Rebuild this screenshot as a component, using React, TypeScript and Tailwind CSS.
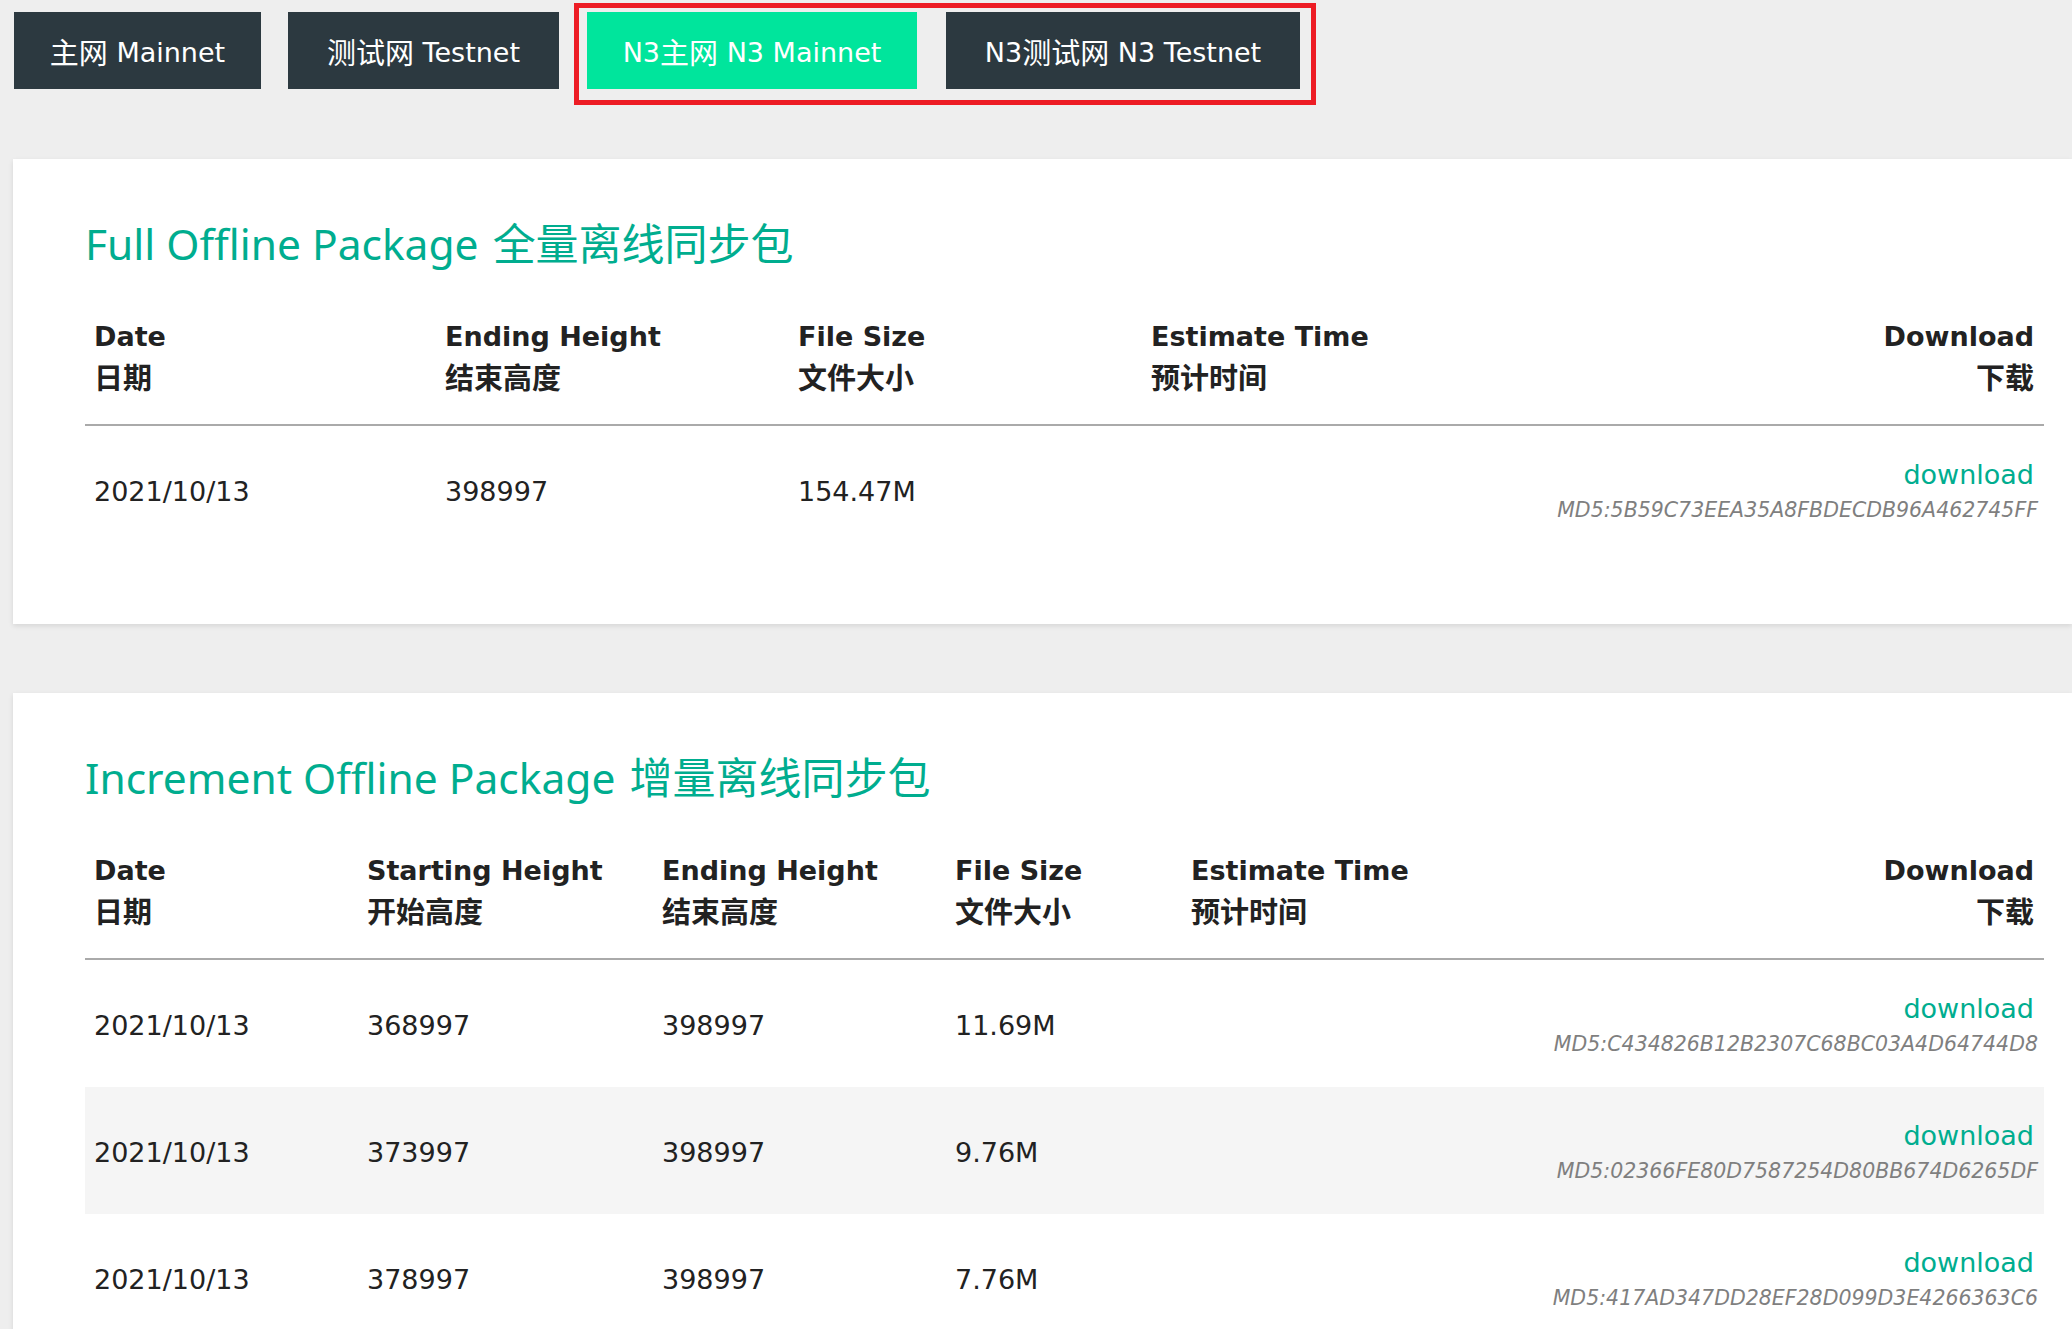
import React from 'react';

interface Row {
  date: string;
  start?: string;
  end: string;
  size: string;
  md5: string;
}

const body = { fontFamily: '"DejaVu Sans", "Noto Sans CJK SC", sans-serif' };
const titleFont = { fontFamily: '"Noto Sans", "Noto Sans CJK SC", sans-serif' };

const fullRows: Row[] = [
  { date: '2021/10/13', end: '398997', size: '154.47M', md5: 'MD5:5B59C73EEA35A8FBDECDB96A462745FF' },
];

const incRows: Row[] = [
  { date: '2021/10/13', start: '368997', end: '398997', size: '11.69M', md5: 'MD5:C434826B12B2307C68BC03A4D64744D8' },
  { date: '2021/10/13', start: '373997', end: '398997', size: '9.76M', md5: 'MD5:02366FE80D7587254D80BB674D6265DF' },
  { date: '2021/10/13', start: '378997', end: '398997', size: '7.76M', md5: 'MD5:417AD347DD28EF28D099D3E4266363C6' },
];

// CJK glyphs in the reference render a touch larger than the latin text
const Cn: React.FC<{ children: React.ReactNode }> = ({ children }) => (
  <span className="text-[29px] leading-[28px]">{children}</span>
);

const Head: React.FC<{ en: string; cn: string; right?: boolean }> = ({ en, cn, right }) => (
  <div className={`flex flex-col px-[9px] font-bold leading-[42px] text-[#222] ${right ? 'items-end pr-[10px]' : ''}`}>
    <span>{en}</span>
    <span className="pt-[1px]">
      <Cn>{cn}</Cn>
    </span>
  </div>
);

const Cell: React.FC<{ children?: React.ReactNode }> = ({ children }) => <div className="px-[9px] pt-[4px]">{children}</div>;

const DownloadCell: React.FC<{ md5: string }> = ({ md5 }) => (
  <div className="flex flex-col items-end pr-[10px]">
    <a className="pt-[1px] text-[27px] leading-[40px] text-[#00ad8f]">download</a>
    <span className="mr-[-4px] text-[20.5px] italic leading-[31px] text-[#7f7f7f]">{md5}</span>
  </div>
);

const Card: React.FC<{ title: string; cn: string; children: React.ReactNode; className?: string }> = ({ title, cn, children, className }) => (
  <div className={`ml-[13px] bg-white pb-[71px] pl-[72px] pr-[28px] pt-[53px] shadow-[0_2px_5px_rgba(0,0,0,0.1)] ${className ?? ''}`}>
    <h2 className="mb-[12px] text-[42.5px] leading-[64px] text-[#00ad8f]" style={titleFont}>
      {title} <span className="ml-[3px] text-[43px] leading-[40px]">{cn}</span>
    </h2>
    {children}
  </div>
);

export default function App() {
  return (
    <div className="min-h-screen overflow-hidden bg-[#eeeeee] text-[27px] text-[#222]" style={body}>
      {/* network tabs */}
      <div className="flex items-start pl-[14px] pt-[3px]">
        <div className="mr-[27px] mt-[9px] flex h-[77px] w-[247px] items-center justify-center bg-[#2c3940] pt-[6px] text-white">
          <Cn>主网</Cn>&nbsp;Mainnet
        </div>
        <div className="mr-[15px] mt-[9px] flex h-[77px] w-[271px] items-center justify-center bg-[#2c3940] pt-[6px] text-white">
          <Cn>测试网</Cn>&nbsp;Testnet
        </div>
        <div className="flex border-[5px] border-[#ed1c24] pb-[11px] pl-[8px] pr-[11px] pt-[4px]">
          <div className="flex h-[77px] w-[330px] items-center justify-center bg-[#00e59c] pt-[6px] text-white">
            N3<Cn>主网</Cn>&nbsp;N3 Mainnet
          </div>
          <div className="ml-[29px] flex h-[77px] w-[354px] items-center justify-center bg-[#2c3940] pt-[6px] text-white">
            N3<Cn>测试网</Cn>&nbsp;N3 Testnet
          </div>
        </div>
      </div>

      <Card title="Full Offline Package" cn="全量离线同步包" className="mt-[54px]">
        <div className="grid grid-cols-[351px_353px_353px_1fr_auto] border-b-2 border-[#aaaaaa] pb-[23px] pt-[28px]">
          <Head en="Date" cn="日期" />
          <Head en="Ending Height" cn="结束高度" />
          <Head en="File Size" cn="文件大小" />
          <Head en="Estimate Time" cn="预计时间" />
          <Head en="Download" cn="下载" right />
        </div>
        {fullRows.map((r) => (
          <div key={r.md5} className="grid grid-cols-[351px_353px_353px_1fr_auto] items-center pb-[27px] pt-[28px]">
            <Cell>{r.date}</Cell>
            <Cell>{r.end}</Cell>
            <Cell>{r.size}</Cell>
            <div />
            <DownloadCell md5={r.md5} />
          </div>
        ))}
      </Card>

      <Card title="Increment Offline Package" cn="增量离线同步包" className="mt-[69px]">
        <div className="grid grid-cols-[273px_295px_293px_236px_1fr_auto] border-b-2 border-[#aaaaaa] pb-[23px] pt-[28px]">
          <Head en="Date" cn="日期" />
          <Head en="Starting Height" cn="开始高度" />
          <Head en="Ending Height" cn="结束高度" />
          <Head en="File Size" cn="文件大小" />
          <Head en="Estimate Time" cn="预计时间" />
          <Head en="Download" cn="下载" right />
        </div>
        {incRows.map((r, i) => (
          <div
            key={r.md5}
            className={`grid grid-cols-[273px_295px_293px_236px_1fr_auto] items-center pb-[27px] pt-[28px] ${i % 2 === 1 ? 'bg-[#f5f5f5]' : ''}`}
          >
            <Cell>{r.date}</Cell>
            <Cell>{r.start}</Cell>
            <Cell>{r.end}</Cell>
            <Cell>{r.size}</Cell>
            <div />
            <DownloadCell md5={r.md5} />
          </div>
        ))}
      </Card>
    </div>
  );
}
